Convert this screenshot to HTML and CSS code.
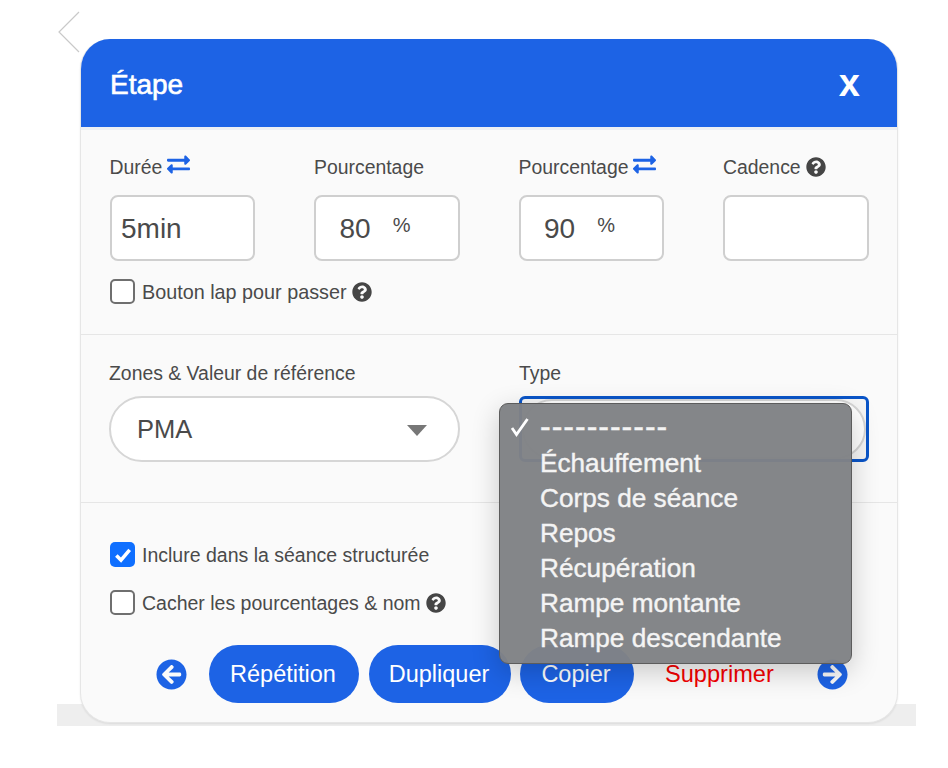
FILE: index.html
```html
<!DOCTYPE html>
<html lang="fr">
<head>
<meta charset="utf-8">
<title>Étape</title>
<link rel="stylesheet" href="styles.css">
</head>
<body>
<svg class="defs" width="0" height="0" aria-hidden="true">
  <symbol id="swap" viewBox="0 0 512 512"><path d="M0 168v-16c0-13.255 10.745-24 24-24h360V80c0-21.367 25.899-32.042 40.971-16.971l80 80c9.372 9.373 9.372 24.569 0 33.941l-80 80C409.956 271.982 384 261.456 384 240v-48H24c-13.255 0-24-10.745-24-24zm488 152H128v-48c0-21.314-25.862-32.08-40.971-16.971l-80 80c-9.372 9.373-9.372 24.569 0 33.941l80 80C102.057 463.997 128 453.437 128 432v-48h360c13.255 0 24-10.745 24-24v-16c0-13.255-10.745-24-24-24z"/></symbol>
  <symbol id="help" viewBox="0 0 512 512"><path d="M504 256c0 136.997-111.043 248-248 248S8 392.997 8 256C8 119.083 119.043 8 256 8s248 111.083 248 248zM262.655 90c-54.497 0-89.255 22.957-116.549 63.758-3.536 5.286-2.353 12.415 2.715 16.258l34.699 26.31c5.205 3.947 12.621 3.008 16.665-2.122 17.864-22.658 30.113-35.797 57.303-35.797 20.429 0 45.698 13.148 45.698 32.958 0 14.976-12.363 22.667-32.534 33.976C247.128 238.528 216 254.941 216 296v4c0 6.627 5.373 12 12 12h56c6.627 0 12-5.373 12-12v-1.333c0-28.462 83.186-29.647 83.186-106.667 0-58.002-60.165-102-116.531-102zM256 338c-25.365 0-46 20.635-46 46 0 25.364 20.635 46 46 46s46-20.636 46-46c0-25.365-20.635-46-46-46z"/></symbol>
</svg>
<div class="page">
  <div class="backdrop-strip"></div>
  <svg class="back-chevron" width="22" height="42" viewBox="0 0 22 42"><path d="M21 1 1 21l20 20" fill="none" stroke="#c9c9c9" stroke-width="1.2"/></svg>

  <section class="modal">
    <header class="modal-head">
      <h1 class="modal-title">Étape</h1>
      <span class="modal-close">x</span>
    </header>

    <div class="section section-top">
      <div class="fields">
        <div class="field">
          <div class="label">Durée <svg class="ico-swap"><use href="#swap"/></svg></div>
          <div class="box"><span class="box-text">5min</span></div>
        </div>
        <div class="field">
          <div class="label">Pourcentage</div>
          <div class="box box-pct"><span class="box-text">80</span><span class="pct">%</span></div>
        </div>
        <div class="field">
          <div class="label">Pourcentage <svg class="ico-swap"><use href="#swap"/></svg></div>
          <div class="box box-pct"><span class="box-text">90</span><span class="pct">%</span></div>
        </div>
        <div class="field">
          <div class="label">Cadence <svg class="ico-help"><use href="#help"/></svg></div>
          <div class="box"></div>
        </div>
      </div>
      <div class="check check-lap"><span class="tick"></span>Bouton lap pour passer <svg class="ico-help"><use href="#help"/></svg></div>
    </div>

    <div class="section section-mid">
      <div class="selects">
        <div class="field-wide">
          <div class="label">Zones &amp; Valeur de référence</div>
          <div class="pill-select"><span>PMA</span><span class="caret"></span></div>
        </div>
        <div class="field-wide">
          <div class="label">Type</div>
          <div class="focus-ring"><div class="pill-inner"></div></div>
        </div>
      </div>
    </div>

    <div class="section section-bottom">
      <div class="check"><span class="tick tick-on"><svg width="20" height="20" viewBox="0 0 18 18"><path d="M3 9.5 7.2 13.6 15 4.4" fill="none" stroke="#fff" stroke-width="3.2"/></svg></span>Inclure dans la séance structurée</div>
      <div class="check check-second"><span class="tick"></span>Cacher les pourcentages &amp; nom <svg class="ico-help"><use href="#help"/></svg></div>
      <div class="actions">
        <svg class="ico-arrow" viewBox="0 0 512 512"><path d="M256 504C119 504 8 393 8 256S119 8 256 8s248 111 248 248-111 248-248 248zm28.9-143.6L209.4 288H392c13.3 0 24-10.7 24-24v-16c0-13.3-10.7-24-24-24H209.4l75.5-72.4c9.7-9.3 9.9-24.8.4-34.3l-11-10.9c-9.4-9.4-24.6-9.4-33.9 0L107.7 239c-9.4 9.4-9.4 24.6 0 33.9l132.7 132.7c9.4 9.4 24.6 9.4 33.9 0l11-10.9c9.5-9.5 9.3-25-.4-34.3z"/></svg>
        <span class="btn btn-rep">Répétition</span>
        <span class="btn btn-dup">Dupliquer</span>
        <span class="btn btn-cop">Copier</span>
        <span class="btn-del">Supprimer</span>
        <svg class="ico-arrow" viewBox="0 0 512 512"><path d="M256 8c137 0 248 111 248 248S393 504 256 504 8 393 8 256 119 8 256 8zm-28.9 143.6l75.5 72.4H120c-13.3 0-24 10.7-24 24v16c0 13.3 10.7 24 24 24h182.6l-75.5 72.4c-9.7 9.3-9.9 24.8-.4 34.3l11 10.9c9.4 9.4 24.6 9.4 33.9 0L404.3 273c9.4-9.4 9.4-24.6 0-33.9L271.6 106.3c-9.4-9.4-24.6-9.4-33.9 0l-11 10.9c-9.5 9.6-9.3 25.1.4 34.4z"/></svg>
      </div>
    </div>
  </section>

  <div class="menu">
    <div class="menu-item menu-first"><svg class="menu-check" width="20" height="20" viewBox="0 0 20 20"><path d="M2 11 6.5 17.5 17.5 2" fill="none" stroke="#fff" stroke-width="2.8"/></svg><span class="menu-dashes">-----------</span></div>
    <div class="menu-item">Échauffement</div>
    <div class="menu-item">Corps de séance</div>
    <div class="menu-item">Repos</div>
    <div class="menu-item">Récupération</div>
    <div class="menu-item">Rampe montante</div>
    <div class="menu-item">Rampe descendante</div>
  </div>
</div>
</body>
</html>
```
FILE: styles.css
```css
* { box-sizing: border-box; }
html, body { margin: 0; padding: 0; background: #fff; }
body { font-family: "Liberation Sans", Arial, sans-serif; color: #4a4a4a; }
.defs { position: absolute; }
.page { position: relative; width: 948px; height: 768px; padding: 39px 50px 0 80px; overflow: hidden; }

.backdrop-strip { position: absolute; left: 57px; top: 704px; width: 859px; height: 22px; background: #eeeeee; }
.back-chevron { position: absolute; left: 58px; top: 11px; }

.modal { position: relative; width: 818px; height: 684px; background: #fafafa; border-radius: 30px; border: 1px solid #e6e6e6; border-top: 0; box-shadow: 0 1px 2px rgba(0,0,0,.08); overflow: hidden; }
.modal-head { height: 91px; margin: 0 -1px; background: #1d63e5; border-bottom: 3px solid #eef0f4; color: #fff; display: flex; align-items: center; justify-content: space-between; padding: 4px 38px 0 30px; }
.modal-title { margin: 0; font-size: 28px; font-weight: 400; -webkit-text-stroke: .6px #fff; }
.modal-close { font-size: 38px; font-weight: 700; line-height: 1; padding-bottom: 5px; }

.section { padding-left: 29px; padding-right: 28px; border-bottom: 1px solid #e6e6e6; }
.section-top { height: 205px; padding-top: 24px; }
.section-mid { height: 168px; padding-top: 25px; }
.section-bottom { border-bottom: 0; padding-top: 39px; }

.fields { display: grid; grid-template-columns: repeat(4, 145.5px); column-gap: 59px; margin-left: -.5px; }
.label { font-size: 19.4px; line-height: 26px; height: 26px; white-space: nowrap; display: flex; align-items: center; gap: 5px; }
.box { margin-top: 15px; height: 66px; background: #fff; border: 2px solid #cfcfcf; border-radius: 8px; display: flex; align-items: center; padding: 2px 0 0 9.5px; }
.box-pct { padding-left: 23.5px; }
.box-text { font-size: 28px; }
.pct { font-size: 20px; margin-left: 22px; margin-top: -8px; }

.ico-swap { width: 23px; height: 23px; fill: #1d63e5; margin-top: -6px; }
.ico-help { width: 20px; height: 20px; fill: #454545; flex: none; }

.check { display: flex; align-items: center; font-size: 19.5px; line-height: 24px; white-space: nowrap; }
.check .ico-help { margin-left: 5px; }
.check-lap { margin-top: 18px; font-size: 19.8px; }
.check-second { margin-top: 23px; }
.tick { width: 25px; height: 25px; margin-right: 7px; flex: none; border: 2px solid #6f6f6f; border-radius: 5px; background: #fff; display: flex; align-items: center; justify-content: center; }
.tick-on { background: #0f6fff; border: 0; }

.selects { display: grid; grid-template-columns: 351px 350px; column-gap: 59px; margin-left: -1px; }
.pill-select { margin-top: 10px; height: 66px; background: #fff; border: 2px solid #d6d6d6; border-radius: 33px; display: flex; align-items: center; justify-content: space-between; padding: 0 31px 0 26px; font-size: 25.5px; }
.focus-ring { margin-top: 10px; height: 66px; border: 3px solid #0a55c8; border-radius: 6px; background: #f6f6f6; }
.pill-inner { height: 100%; border: 2px solid #d6d6d6; border-radius: 30px; background: #fff; }
.caret { width: 0; height: 0; border-left: 10px solid transparent; border-right: 10px solid transparent; border-top: 11px solid #777; margin-top: 3px; }

.actions { display: flex; align-items: center; height: 58px; margin-top: 30px; padding-left: 46px; }
.ico-arrow { width: 31px; height: 31px; fill: #1d63e5; flex: none; }
.btn { height: 58px; border-radius: 29px; background: #1d63e5; color: #fff; font-size: 23.5px; display: flex; align-items: center; justify-content: center; flex: none; padding-right: 2px; }
.btn-rep { width: 150px; margin-left: 22px; }
.btn-dup { width: 142px; margin-left: 10px; }
.btn-cop { width: 114px; margin-left: 9px; }
.btn-del { color: #f40000; font-size: 23.6px; margin-left: 31px; margin-right: 43px; width: 109px; white-space: nowrap; }

.menu { position: absolute; left: 499px; top: 403px; width: 353px; height: 261px; padding: 7px 0 0; background: rgba(128,130,133,.97); border: 1px solid #5c5c5c; border-radius: 9px; box-shadow: 0 8px 28px rgba(0,0,0,.2); color: #f4f4f4; }
.menu-item { position: relative; height: 35px; line-height: 35px; padding-left: 40px; font-size: 26.2px; -webkit-text-stroke: .4px #f4f4f4; white-space: nowrap; }
.menu-dashes { font-size: 32px; letter-spacing: 1px; line-height: 30px; }
.menu-check { position: absolute; left: 10px; top: 6px; }
```
